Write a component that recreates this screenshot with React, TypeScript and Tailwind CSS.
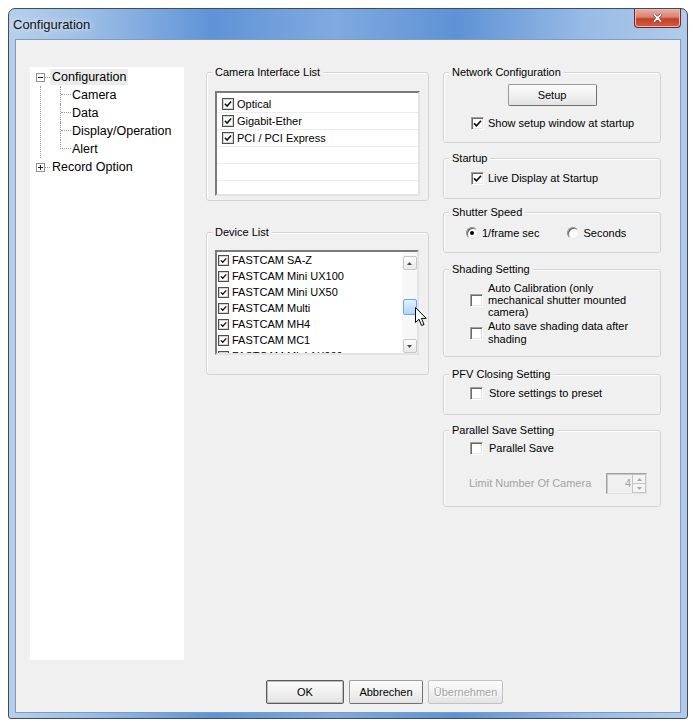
import React from "react"

const FONT = "font-['Liberation_Sans',Arial,sans-serif]"

function Tick({ className = "w-[9px] h-[9px]" }: { className?: string }) {
  return (
    <svg viewBox="0 0 9 9" className={className}>
      <path d="M1 4.3 L3.5 6.8 L8 1.8" fill="none" stroke="#111" strokeWidth="1.7" />
    </svg>
  )
}

// checkbox drawn inside list views (Vista style, dark frame)
function ListCheck({ small }: { small?: boolean }) {
  return (
    <span
      className={`flex items-center justify-center shrink-0 bg-white border border-[#4d4d4d] shadow-[inset_0_0_0_1px_#d4d4d4] ${
        small ? "w-[11px] h-[11px]" : "w-[12px] h-[12px]"
      }`}
    >
      <Tick className={small ? "w-[7px] h-[7px]" : "w-[8px] h-[8px]"} />
    </span>
  )
}

// classic sunken checkbox
function Check({ checked }: { checked?: boolean }) {
  return (
    <span className="flex items-center justify-center w-[13px] h-[13px] shrink-0 bg-white border border-t-[#a0a0a0] border-l-[#a0a0a0] border-r-white border-b-white shadow-[inset_1px_1px_0_#696969,inset_-1px_-1px_0_#e3e3e3]">
      {checked && <Tick />}
    </span>
  )
}

function Radio({ checked }: { checked?: boolean }) {
  return (
    <span className="flex items-center justify-center w-[12px] h-[12px] shrink-0 rounded-full bg-white border border-t-[#8a8a8a] border-l-[#8a8a8a] border-r-[#e8e8e8] border-b-[#e8e8e8] shadow-[inset_1px_1px_0_#5f5f5f]">
      {checked && <span className="w-[4px] h-[4px] rounded-full bg-black" />}
    </span>
  )
}

function Group({ title, className = "", children }: { title: string; className?: string; children?: React.ReactNode }) {
  return (
    <div className={`border border-[#d0d5da] rounded-[3px] shadow-[inset_1px_1px_0_#ffffff] ${className}`}>
      <div className="-mt-[7px] ml-[5px] w-fit px-[3px] bg-[#f0f0f0] leading-[13px]">{title}</div>
      {children}
    </div>
  )
}

function Button({ label, className = "", isDefault, disabled }: { label: string; className?: string; isDefault?: boolean; disabled?: boolean }) {
  const border = disabled
    ? "border-[#c2c2c2]"
    : isDefault
    ? "border-[#5b5b5b] shadow-[inset_0_0_0_1px_#bdbdbd]"
    : "border-[#9c9c9c] border-r-[#707070] border-b-[#707070]"
  return (
    <div
      className={`flex items-center justify-center rounded-[2px] border bg-[linear-gradient(180deg,#fbfbfb_0%,#f1f1f1_50%,#e3e3e3_100%)] ${border} ${
        disabled ? "text-[#a3a3a3] [text-shadow:1px_1px_0_#ffffff]" : "text-black"
      } ${className}`}
    >
      {label}
    </div>
  )
}

function TreeBox({ plus }: { plus?: boolean }) {
  return (
    <svg viewBox="0 0 9 9" className="w-[9px] h-[9px] shrink-0">
      <rect x="0.5" y="0.5" width="8" height="8" fill="#fff" stroke="#919191" />
      <path d="M2 4.5 H7" stroke="#222" />
      {plus && <path d="M4.5 2 V7" stroke="#222" />}
    </svg>
  )
}

function ChildRow({ label, last }: { label: string; last?: boolean }) {
  return (
    <div className="flex h-[18px]">
      <div className="w-[19px] shrink-0" />
      <div className={`w-[11px] shrink-0 ${last ? "" : "border-l border-dotted border-[#9a9a9a]"}`}>
        <div className={`h-[9px] border-b border-dotted border-[#9a9a9a] ${last ? "border-l" : ""}`} />
      </div>
      <span className="ml-px leading-[18px]">{label}</span>
    </div>
  )
}

function Tree() {
  return (
    <div className="w-[154px] h-[593px] shrink-0 bg-white pt-px text-[12.5px]">
      <div className="flex items-center h-[18px] pl-[6px]">
        <TreeBox />
        <span className="w-[5px] border-t border-dotted border-[#9a9a9a]" />
        <span className="px-[2px] bg-[#ececec] leading-[16px]">Configuration</span>
      </div>
      <div className="ml-[10px] border-l border-dotted border-[#9a9a9a]">
        <ChildRow label="Camera" />
        <ChildRow label="Data" />
        <ChildRow label="Display/Operation" />
        <ChildRow label="Alert" last />
      </div>
      <div className="flex items-center h-[18px] pl-[6px]">
        <TreeBox plus />
        <span className="w-[5px] border-t border-dotted border-[#9a9a9a]" />
        <span className="px-[2px] leading-[16px]">Record Option</span>
      </div>
    </div>
  )
}

function ScrollArrow({ up }: { up?: boolean }) {
  return (
    <div className="flex items-center justify-center w-[14px] h-[14px] mx-auto rounded-[2px] border border-[#c8c8c8] bg-[linear-gradient(180deg,#fdfdfd_0%,#e9e9e9_100%)]">
      <svg viewBox="0 0 5 3" className="w-[5px] h-[3px]">
        <path d={up ? "M0 3 L2.5 0 L5 3 Z" : "M0 0 L2.5 3 L5 0 Z"} fill="#4a4a4a" />
      </svg>
    </div>
  )
}

function Cursor() {
  return (
    <svg viewBox="0 0 13 20" className="absolute left-[198px] top-[55px] w-[13px] h-[20px]">
      <path
        d="M0.5 0.5 L0.5 15.5 L4 12.2 L6.6 18.5 L9 17.5 L6.5 11.4 L11.2 11.4 Z"
        fill="#fff"
        stroke="#000"
        strokeWidth="1"
        strokeLinejoin="round"
      />
    </svg>
  )
}

const interfaces = ["Optical", "Gigabit-Ether", "PCI / PCI Express", "", "", ""]
const devices = [
  "FASTCAM SA-Z",
  "FASTCAM Mini UX100",
  "FASTCAM Mini UX50",
  "FASTCAM Multi",
  "FASTCAM MH4",
  "FASTCAM MC1",
  "FASTCAM Mini AX200",
]

const listBorder = "border-2 border-t-[#7a7a7a] border-l-[#7a7a7a] border-r-[#e3e3e3] border-b-[#e3e3e3]"

export default function App() {
  return (
    <div className={`min-h-screen bg-white pt-[8px] pl-[8px] text-[11px] text-black ${FONT}`}>
      <div className="w-[680px] h-[711px] flex flex-col rounded-t-[7px] rounded-b-[3px] border border-[#3b4c63] bg-[linear-gradient(90deg,#b8cfea_0%,#9bbde6_12%,#5f93d6_30%,#80aae0_48%,#5e92d5_66%,#98bbe6_85%,#b2cbea_100%)]">
        {/* title bar */}
        <div className="h-[30px] flex items-start justify-between shrink-0">
          <span className="pl-[4px] pt-[6px] text-[13px] text-[#111] [text-shadow:0_0_6px_#ffffff]">Configuration</span>
          <div className="mr-[6px] w-[47px] h-[19px] flex items-center justify-center rounded-b-[4px] border border-t-0 border-[#6b2c23] bg-[linear-gradient(180deg,#eab0a4_0%,#d9826f_45%,#c33f28_55%,#d45c44_100%)] shadow-[inset_0_0_0_1px_#f0b7aa]">
            <svg viewBox="0 0 10 9" className="w-[9px] h-[8px]">
              <path d="M1.5 1 L8.5 8 M8.5 1 L1.5 8" stroke="#6d2a20" strokeWidth="3.2" strokeLinecap="round" />
              <path d="M1.5 1 L8.5 8 M8.5 1 L1.5 8" stroke="#ffffff" strokeWidth="2" strokeLinecap="round" />
            </svg>
          </div>
        </div>

        {/* client area */}
        <div className="flex-1 ml-[6px] mr-[6px] mb-[5px] border border-[#7f9bc0] bg-[#f0f0f0]">
          <div className="flex pl-[14px] pt-[27px]">
            <Tree />

            {/* middle column */}
            <div className="ml-[22px] w-[223px] pt-[5px] flex flex-col">
              <Group title="Camera Interface List" className="h-[129px]">
                <div className={`mt-[12px] ml-[8px] w-[205px] h-[105px] bg-white overflow-hidden pt-[3px] ${listBorder}`}>
                  {interfaces.map((name, i) => (
                    <div key={i} className="flex items-center h-[17px] pl-[5px] border-b border-[#ececec]">
                      {name && (
                        <>
                          <ListCheck />
                          <span className="ml-[3px]">{name}</span>
                        </>
                      )}
                    </div>
                  ))}
                </div>
              </Group>

              <Group title="Device List" className="mt-[31px] h-[143px]">
                <div className={`relative mt-[11px] ml-[8px] w-[204px] h-[105px] bg-white flex ${listBorder}`}>
                  <div className="flex-1 overflow-hidden">
                    {devices.map((name) => (
                      <div key={name} className="flex items-center h-[16px] pl-px">
                        <ListCheck small />
                        <span className="ml-[3px] whitespace-nowrap">{name}</span>
                      </div>
                    ))}
                  </div>
                  <div className="w-[15px] shrink-0 bg-[#f7f7f7] flex flex-col pt-[4px]">
                    <ScrollArrow up />
                    <div className="mt-[29px] mx-auto w-[14px] h-[16px] rounded-[2px] border border-[#6aa9dc] bg-[linear-gradient(180deg,#e3f2fd_0%,#c7e3f9_50%,#b1d7f5_100%)]" />
                    <div className="mt-[24px]">
                      <ScrollArrow />
                    </div>
                  </div>
                  <Cursor />
                </div>
              </Group>
            </div>

            {/* right column */}
            <div className="ml-[14px] w-[218px] pt-[5px] flex flex-col">
              <Group title="Network Configuration" className="h-[71px]">
                <Button label="Setup" className="mt-[5px] mx-auto w-[89px] h-[22px]" />
                <div className="mt-[10px] pl-[27px] flex items-center h-[14px]">
                  <Check checked />
                  <span className="ml-[4px]">Show setup window at startup</span>
                </div>
              </Group>

              <Group title="Startup" className="mt-[15px] h-[41px]">
                <div className="mt-[6px] pl-[27px] flex items-center h-[14px]">
                  <Check checked />
                  <span className="ml-[4px]">Live Display at Startup</span>
                </div>
              </Group>

              <Group title="Shutter Speed" className="mt-[13px] h-[41px]">
                <div className="mt-[7px] pl-[22px] flex items-center h-[14px]">
                  <Radio checked />
                  <span className="ml-[4px]">1/frame sec</span>
                  <span className="ml-[28px]">
                    <Radio />
                  </span>
                  <span className="ml-[4px]">Seconds</span>
                </div>
              </Group>

              <Group title="Shading Setting" className="mt-[16px] h-[88px]">
                <div className="mt-[6px] pl-[26px] flex items-center">
                  <Check />
                  <span className="ml-[5px] leading-[12px]">
                    Auto Calibration (only
                    <br />
                    mechanical shutter mounted
                    <br />
                    camera)
                  </span>
                </div>
                <div className="mt-[2px] pl-[26px] flex items-center">
                  <Check />
                  <span className="ml-[5px] leading-[13px]">
                    Auto save shading data after
                    <br />
                    shading
                  </span>
                </div>
              </Group>

              <Group title="PFV Closing Setting" className="mt-[17px] h-[41px]">
                <div className="mt-[5px] pl-[26px] flex items-center h-[14px]">
                  <Check />
                  <span className="ml-[6px]">Store settings to preset</span>
                </div>
              </Group>

              <Group title="Parallel Save Setting" className="mt-[15px] h-[77px]">
                <div className="mt-[4px] pl-[26px] flex items-center h-[14px]">
                  <Check />
                  <span className="ml-[6px]">Parallel Save</span>
                </div>
                <div className="mt-[18px] pl-[25px] pr-[13px] flex items-center justify-between">
                  <span className="text-[#a3a3a3]">Limit Number Of Camera</span>
                  <div className="w-[41px] h-[21px] flex bg-[#f0f0f0] border border-t-[#a0a0a0] border-l-[#a0a0a0] border-r-[#e3e3e3] border-b-[#e3e3e3] shadow-[inset_1px_1px_0_#c8c8c8]">
                    <span className="flex-1 text-right pr-px leading-[19px] text-[#a3a3a3]">4</span>
                    <div className="w-[14px] flex flex-col">
                      <div className="flex-1 flex items-center justify-center border border-[#c4c4c4] bg-[#f4f4f4]">
                        <svg viewBox="0 0 5 3" className="w-[5px] h-[3px]">
                          <path d="M0 3 L2.5 0 L5 3 Z" fill="#a8a8a8" />
                        </svg>
                      </div>
                      <div className="flex-1 flex items-center justify-center border border-t-0 border-[#c4c4c4] bg-[#f4f4f4]">
                        <svg viewBox="0 0 5 3" className="w-[5px] h-[3px]">
                          <path d="M0 0 L2.5 3 L5 0 Z" fill="#a8a8a8" />
                        </svg>
                      </div>
                    </div>
                  </div>
                </div>
              </Group>
            </div>
          </div>

          {/* dialog buttons */}
          <div className="mt-[20px] pl-[250px] flex gap-[5px]">
            <Button label="OK" isDefault className="w-[78px] h-[24px]" />
            <Button label="Abbrechen" className="w-[74px] h-[24px]" />
            <Button label="Übernehmen" disabled className="w-[75px] h-[24px]" />
          </div>
        </div>
      </div>
    </div>
  )
}
